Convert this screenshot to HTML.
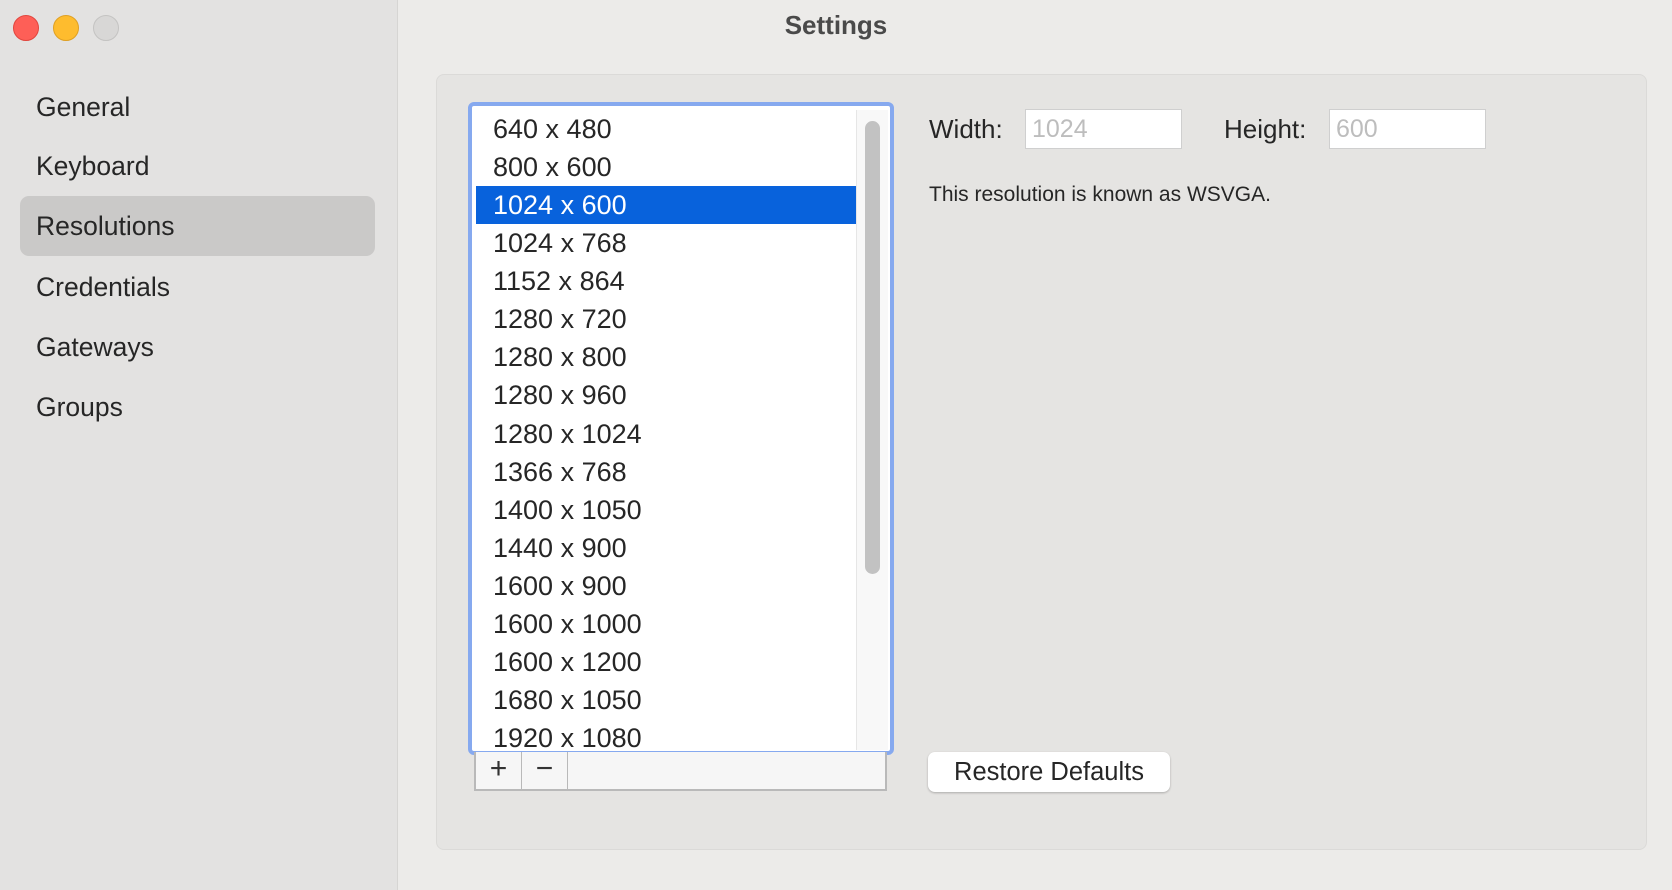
<!DOCTYPE html>
<html><head><meta charset="utf-8"><style>
*{box-sizing:border-box;margin:0;padding:0}
body{width:1672px;height:890px;overflow:hidden;background:#ecebe9;font-family:"Liberation Sans",sans-serif;color:#262626;position:relative}
.side{position:absolute;left:0;top:0;width:398px;height:890px;background:#e3e2e1;border-right:1px solid #d6d5d3}
.tl{position:absolute;top:15px;width:26px;height:26px;border-radius:50%}
.si{position:absolute;left:36px;font-size:26.5px;line-height:30px}
.sel{position:absolute;left:20px;top:196px;width:355px;height:60px;background:#cac9c8;border-radius:9px}
.group{position:absolute;left:436px;top:74px;width:1211px;height:776px;background:#e5e4e2;border:1px solid #dbdad8;border-radius:8px}
.ring{position:absolute;left:468px;top:102px;width:426px;height:653px;border:4px solid #86a9ef;border-radius:6px;background:#fff;overflow:hidden}
.rows{position:absolute;left:4px;top:4px;width:380px}
.row{height:38.07px;line-height:38px;font-size:27px;padding-left:17px;color:#262626}
.row.s{background:#0862dc;color:#fff}
.sb{position:absolute;left:384px;top:4px;width:32px;height:640px;background:#f8f8f8;border-left:1px solid #e6e6e6}
.thumb{position:absolute;left:8px;top:11px;width:15px;height:453px;background:#c2c2c2;border-radius:8px}
.bar{position:absolute;left:474px;top:752px;width:413px;height:39px;border:2px solid #b9b9b9;border-top:none;background:#f6f6f6}
.bb{position:absolute;top:0;height:37px;width:46px;border-right:1.5px solid #b9b9b9;font-size:30px;line-height:34px;text-align:center;color:#333}
.lbl{position:absolute;font-size:26px;top:114px}
.inp{position:absolute;top:109px;width:157px;height:40px;background:#fff;border:1px solid #cfcfcf;font-size:25px;color:#bdbdbd;padding-left:6px;line-height:38px}
.desc{position:absolute;left:929px;top:183px;font-size:21px}
.btn{position:absolute;left:928px;top:752px;width:242px;height:40px;background:#fff;border-radius:7px;box-shadow:0 1px 2px rgba(0,0,0,.25);font-size:25.5px;text-align:center;line-height:40px}
</style></head><body>
<div class="side">
<div class="tl" style="left:13px;background:#fe5f57;border:1px solid #e1463e"></div>
<div class="tl" style="left:53px;background:#febc2e;border:1px solid #dfa023"></div>
<div class="tl" style="left:93px;background:#d8d7d6;border:1px solid #c4c3c2"></div>
<div class="sel"></div>
<div class="si" style="top:92px">General</div>
<div class="si" style="top:151px">Keyboard</div>
<div class="si" style="top:211px">Resolutions</div>
<div class="si" style="top:272px">Credentials</div>
<div class="si" style="top:332px">Gateways</div>
<div class="si" style="top:392px">Groups</div>
</div>
<div style="position:absolute;left:0;width:1672px;top:10px;text-align:center;font-weight:bold;font-size:26px;color:#4a4a4a">Settings</div>
<div class="group"></div>
<div class="ring">
<div class="rows">
<div class="row">640 x 480</div>
<div class="row">800 x 600</div>
<div class="row s">1024 x 600</div>
<div class="row">1024 x 768</div>
<div class="row">1152 x 864</div>
<div class="row">1280 x 720</div>
<div class="row">1280 x 800</div>
<div class="row">1280 x 960</div>
<div class="row">1280 x 1024</div>
<div class="row">1366 x 768</div>
<div class="row">1400 x 1050</div>
<div class="row">1440 x 900</div>
<div class="row">1600 x 900</div>
<div class="row">1600 x 1000</div>
<div class="row">1600 x 1200</div>
<div class="row">1680 x 1050</div>
<div class="row">1920 x 1080</div>
</div>
<div class="sb"><div class="thumb"></div></div>
</div>
<div class="bar">
<div class="bb" style="left:0">+</div>
<div class="bb" style="left:46px">−</div>
</div>
<div class="lbl" style="left:929px">Width:</div>
<div class="inp" style="left:1025px">1024</div>
<div class="lbl" style="left:1224px">Height:</div>
<div class="inp" style="left:1329px">600</div>
<div class="desc">This resolution is known as WSVGA.</div>
<div class="btn">Restore Defaults</div>
</body></html>
